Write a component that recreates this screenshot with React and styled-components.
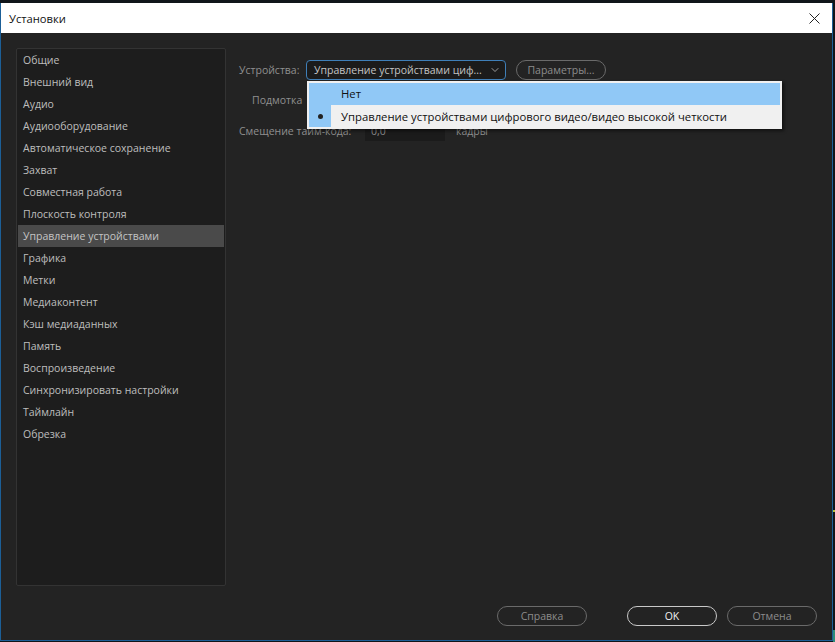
import styled, { createGlobalStyle } from "styled-components";
import { ChevronDown } from "lucide-react";

const sections = [
  "Общие",
  "Внешний вид",
  "Аудио",
  "Аудиооборудование",
  "Автоматическое сохранение",
  "Захват",
  "Совместная работа",
  "Плоскость контроля",
  "Управление устройствами",
  "Графика",
  "Метки",
  "Медиаконтент",
  "Кэш медиаданных",
  "Память",
  "Воспроизведение",
  "Синхронизировать настройки",
  "Таймлайн",
  "Обрезка",
];

const GlobalStyle = createGlobalStyle`
  html, body {
    margin: 0;
    background: #10151a;
  }
  body {
    font-family: "Open Sans", "Noto Sans", sans-serif;
    overflow: hidden;
  }
`;

const Screen = styled.div`
  width: 835px;
  height: 642px;
  padding: 3px 2px 0 0;
  box-sizing: border-box;
  background:
    linear-gradient(#b4c23c, #b4c23c) 100% 510px / 2px 2px no-repeat,
    linear-gradient(#2f8a78, #2f8a78) 100% 630px / 2px 12px no-repeat,
    #10151a;
  display: flex;
`;

const Dialog = styled.div`
  width: 833px;
  height: 638px;
  box-sizing: border-box;
  border-left: 1px solid #1c5f97;
  border-right: 1px solid #1c5f97;
  border-bottom: 1px solid #1c5f97;
  background: #232323;
  display: flex;
  flex-direction: column;
`;

const TitleBar = styled.div`
  height: 30px;
  flex: none;
  background: #fff;
  display: flex;
  align-items: center;
  justify-content: space-between;
  padding: 0 12px 0 8px;
  font-size: 11.2px;
  color: #111;
`;

const Close = styled.svg`
  width: 11px;
  height: 11px;
  stroke: #222;
  stroke-width: 1;
  fill: none;
`;

const Body = styled.div`
  flex: 1;
  min-height: 0;
  display: flex;
  padding: 15px 0 0 15px;
  gap: 13px;
`;

const Sidebar = styled.ul`
  width: 210px;
  height: 538px;
  box-sizing: border-box;
  margin: 0;
  padding: 0 1px;
  list-style: none;
  background: #1d1d1d;
  border: 1px solid #333;
  border-radius: 2px;
`;

const SideItem = styled.li`
  height: 22px;
  line-height: 22px;
  padding-left: 5px;
  font-size: 10.5px;
  white-space: nowrap;
  color: ${(p) => (p.$active ? "#c4c4c4" : "#bdbdbd")};
  background: ${(p) => (p.$active ? "#4a4a4a" : "transparent")};
`;

const Panel = styled.div`
  flex: 1;
  position: relative;
  display: flex;
  flex-direction: column;
  padding-top: 12px;
  gap: 10px;
`;

const Row = styled.div`
  display: flex;
  align-items: center;
  height: 20px;
  margin-top: ${(p) => p.$nudge || 0}px;
  color: #8f8f8f;
  font-size: 10.5px;
  white-space: nowrap;
`;

const Label = styled.span`
  width: ${(p) => p.$width}px;
  padding-left: ${(p) => p.$indent || 0}px;
  box-sizing: border-box;
  flex: none;
`;

const Select = styled.div`
  width: 200px;
  height: 20px;
  box-sizing: border-box;
  border: 1px solid #3f7fb8;
  border-radius: 4px;
  background: #1b1b1b;
  color: #c4c4c4;
  display: flex;
  align-items: center;
  justify-content: space-between;
  padding: 0 4px 0 7px;
  margin-right: 10px;
`;

const Pill = styled.div`
  width: ${(p) => p.$width}px;
  height: 20px;
  box-sizing: border-box;
  border: 1px solid ${(p) => (p.$primary ? "#c8c8c8" : "#6a6a6a")};
  border-radius: 10px;
  color: ${(p) => (p.$primary ? "#f0f0f0" : "#8c8c8c")};
  font-size: 10.5px;
  display: flex;
  align-items: center;
  justify-content: center;
`;

const Field = styled.div`
  width: 80px;
  height: 20px;
  box-sizing: border-box;
  margin: 0 11px 0 10px;
  padding-left: 6px;
  background: #1b1b1b;
  color: #8f8f8f;
  display: flex;
  align-items: center;
`;

const Menu = styled.div`
  position: absolute;
  left: 68px;
  top: 33px;
  width: 475px;
  height: 48px;
  box-sizing: border-box;
  padding: 2px;
  background: #f0f0f0;
  box-shadow: 2px 2px 3px rgba(0, 0, 0, 0.5);
  color: #111;
  font-size: 11.3px;
`;

const MenuItem = styled.div`
  position: relative;
  height: 22px;
  box-sizing: border-box;
  display: flex;
  align-items: center;
  padding: 0 0 ${(p) => (p.$hot ? 2 : 0)}px 32px;
  white-space: nowrap;
  background: ${(p) => (p.$hot ? "#90c8f6" : "transparent")};
`;

const Gutter = styled.span`
  position: absolute;
  left: 0;
  top: 0;
  bottom: 0;
  width: 22px;
  background: #90c8f6;
  display: flex;
  align-items: center;
  justify-content: center;
`;

const Dot = styled.span`
  width: 5px;
  height: 5px;
  border-radius: 50%;
  background: #222;
`;

const Footer = styled.div`
  height: 55px;
  box-sizing: border-box;
  flex: none;
  display: flex;
  justify-content: flex-end;
  align-items: flex-start;
  padding: 21px 15px 0 0;
  gap: ${(p) => p.$gap}px;
`;

const ButtonGroup = styled.div`
  display: flex;
  gap: 10px;
`;

export default function App() {
  return (
    <>
      <GlobalStyle />
      <Screen>
        <Dialog>
          <TitleBar>
            <span>Установки</span>
            <Close viewBox="0 0 11 11">
              <path d="M0.5 0.5 L10.5 10.5 M10.5 0.5 L0.5 10.5" />
            </Close>
          </TitleBar>
          <Body>
            <Sidebar>
              {sections.map((name) => (
                <SideItem key={name} $active={name === "Управление устройствами"}>
                  {name}
                </SideItem>
              ))}
            </Sidebar>
            <Panel>
              <Row>
                <Label $width={67}>Устройства:</Label>
                <Select>
                  <span>Управление устройствами циф...</span>
                  <ChevronDown size={12} color="#c4c4c4" strokeWidth={1.5} />
                </Select>
                <Pill $width={90}>Параметры...</Pill>
              </Row>
              <Row>
                <Label $width={65} $indent={13}>Подмотка</Label>
              </Row>
              <Row $nudge={1}>
                <Label $width={116}>Смещение тайм-кода:</Label>
                <Field>0,0</Field>
                <span>кадры</span>
              </Row>
              <Menu>
                <MenuItem $hot>Нет</MenuItem>
                <MenuItem>
                  <Gutter><Dot /></Gutter>
                  Управление устройствами цифрового видео/видео высокой четкости
                </MenuItem>
              </Menu>
            </Panel>
          </Body>
          <Footer $gap={40}>
            <Pill $width={90}>Справка</Pill>
            <ButtonGroup>
              <Pill $width={90} $primary>OK</Pill>
              <Pill $width={90}>Отмена</Pill>
            </ButtonGroup>
          </Footer>
        </Dialog>
      </Screen>
    </>
  );
}
